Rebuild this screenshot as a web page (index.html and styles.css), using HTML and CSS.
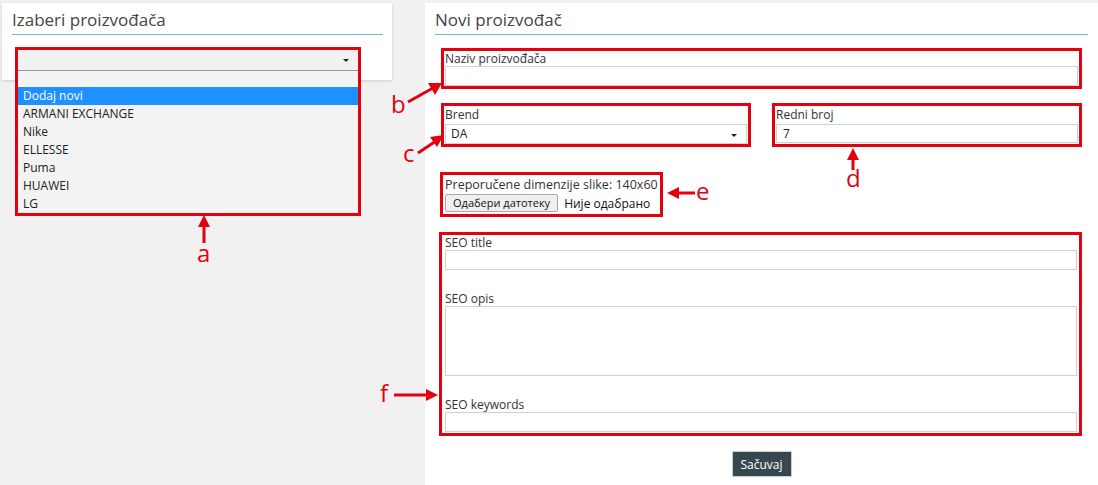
FILE: index.html
```html
<!DOCTYPE html>
<html lang="sr">
<head>
    <meta charset="UTF-8">
    <title>Proizvođači</title>
    <link rel="stylesheet" href="styles.css">
</head>
<body>
    <div class="sidebar">
        <div class="card">
            <h2 class="title">Izaberi proizvođača</h2>
            <div class="mark mark-list">
                <div class="select select-open"><span class="caret"></span></div>
                <ul class="options">
                    <li class="blank"></li>
                    <li class="active">Dodaj novi</li>
                    <li>ARMANI EXCHANGE</li>
                    <li>Nike</li>
                    <li>ELLESSE</li>
                    <li>Puma</li>
                    <li>HUAWEI</li>
                    <li>LG</li>
                </ul>
            </div>
        </div>
    </div>

    <div class="main">
        <h2 class="title">Novi proizvođač</h2>

        <div class="mark mark-wide">
            <label>Naziv proizvođača</label>
            <div class="input"></div>
        </div>

        <div class="row">
            <div class="mark">
                <label>Brend</label>
                <div class="input select">DA<span class="caret"></span></div>
            </div>
            <div class="mark">
                <label>Redni broj</label>
                <div class="input input-num">7</div>
            </div>
        </div>

        <div class="mark mark-file">
            <label class="file-label">Preporučene dimenzije slike: 140x60</label>
            <div class="file">
                <span class="file-btn">Одабери датотеку</span>
                <span class="file-name">Није одабрано</span>
            </div>
        </div>

        <div class="mark mark-seo">
            <div class="field">
                <label>SEO title</label>
                <div class="input"></div>
            </div>
            <div class="field">
                <label>SEO opis</label>
                <div class="input textarea"></div>
            </div>
            <div class="field">
                <label>SEO keywords</label>
                <div class="input"></div>
            </div>
        </div>

        <div class="actions">
            <button class="save">Sačuvaj</button>
        </div>
    </div>

    <!-- annotation arrows -->
    <svg class="notes" width="1098" height="485" viewBox="0 0 1098 485">
        <g stroke="#e3000f" stroke-width="3" fill="#e3000f">
            <line x1="204" y1="243" x2="204" y2="224"/>
            <polygon points="198,227 210,227 204,215" stroke="none"/>
            <line x1="408" y1="102" x2="433" y2="88"/>
            <polygon points="428,83 435,95 442,83" stroke="none"/>
            <line x1="418" y1="153" x2="436" y2="141"/>
            <polygon points="430,137 437,147 444,135" stroke="none"/>
            <line x1="853" y1="170" x2="853" y2="157"/>
            <polygon points="847,160 859,160 853,148" stroke="none"/>
            <line x1="695" y1="193" x2="676" y2="193"/>
            <polygon points="679,187 679,199 667,193" stroke="none"/>
            <line x1="394" y1="395" x2="428" y2="395"/>
            <polygon points="426,389 426,401 438,395" stroke="none"/>
        </g>
        <g class="letters" fill="#e3000f">
            <text x="197" y="262">a</text>
            <text x="391" y="113">b</text>
            <text x="403" y="162">c</text>
            <text x="846" y="187">d</text>
            <text x="696" y="200">e</text>
            <text x="380" y="402">f</text>
        </g>
    </svg>
</body>
</html>
```

FILE: styles.css
```css
body {
    margin: 0;
    height: 485px;
    display: flex;
    background-color: #f1f1f1;
    font-family: "Open Sans", Arial, sans-serif;
    color: #333;
    position: relative;
    overflow: hidden;
}
.title {
    margin: 0;
    padding-top: 5px;
    height: 26px;
    font-size: 17px;
    font-weight: 400;
    line-height: 24px;
    color: #444;
    border-bottom: 1px solid #6fb8d2;
}
.sidebar {
    width: 425px;
    padding-top: 3px;
}
.card {
    margin-left: 2px;
    width: 371px;
    height: 77px;
    padding: 0 9px 0 10px;
    background-color: white;
    box-shadow: 0 1px 3px rgba(0, 0, 0, 0.15);
}
.mark {
    border: 3px solid #e3000f;
}
.mark-list {
    margin: 12px 0 0 3px;
    width: 340px;
    background-color: #f3f3f3;
}
.select {
    position: relative;
}
.select-open {
    height: 20px;
    background-color: #f1f1f1;
    border-bottom: 1px solid #8c9aae;
}
.caret {
    position: absolute;
    right: 9px;
    top: 9px;
    border-left: 3px solid transparent;
    border-right: 3px solid transparent;
    border-top: 3px solid #222;
}
.options {
    list-style: none;
    margin: 0;
    padding: 0;
    font-size: 12px;
}
.options li {
    height: 18px;
    line-height: 18px;
    padding-left: 5px;
    color: #222;
}
.options .blank { height: 16px; }
.options .active {
    background-color: #1e90ff;
    color: white;
}
.main {
    flex: 1;
    margin-top: 3px;
    padding: 0 10px;
    background-color: white;
}
.mark-wide {
    margin: 13px 6px 0 6px;
}
label {
    display: block;
    padding-left: 1px;
    font-size: 12px;
    line-height: 15px;
    color: #333;
}
.input {
    height: 18px;
    margin: 0 1px;
    border: 1px solid #d0d0d0;
    font-size: 12px;
    line-height: 18px;
    padding-left: 5px;
    color: #222;
}
.row {
    display: grid;
    grid-template-columns: repeat(2, minmax(0, 1fr));
    gap: 21px;
    margin: 14px 6px 0 6px;
}
.row label {
    line-height: 17px;
    margin-bottom: 1px;
}
.input-num {
    height: 17px;
    padding-left: 6px;
}
.mark-file {
    width: fit-content;
    margin: 25px 0 0 5px;
    padding: 2px 2px 1px 1px;
}
.file-label {
    font-size: 12.5px;
    line-height: 16px;
}
.file {
    display: flex;
    align-items: center;
    gap: 6px;
    padding: 1px 0 1px 1px;
    font-size: 12px;
}
.file-btn {
    height: 16px;
    padding: 0 7px;
    line-height: 16px;
    font-size: 11px;
    background-color: #efefef;
    border: 1px solid #a9a9a9;
    border-radius: 2px;
    color: #111;
}
.file-name { color: #111; }
.mark-seo {
    margin: 15px 6px 0 4px;
    padding: 0 1px 1px 2px;
}
.field + .field { margin-top: 21px; }
.textarea { height: 68px; }
.actions {
    display: flex;
    justify-content: center;
    margin-top: 15px;
}
.save {
    width: 60px;
    height: 26px;
    padding: 0;
    border: 1px solid #c8d0d4;
    background-color: #37474f;
    color: white;
    font-family: "Open Sans", Arial, sans-serif;
    font-size: 12px;
}
.notes {
    position: absolute;
    left: 0;
    top: 0;
    pointer-events: none;
}
.letters text {
    font-family: "Open Sans", Arial, sans-serif;
    font-size: 24px;
}
```
